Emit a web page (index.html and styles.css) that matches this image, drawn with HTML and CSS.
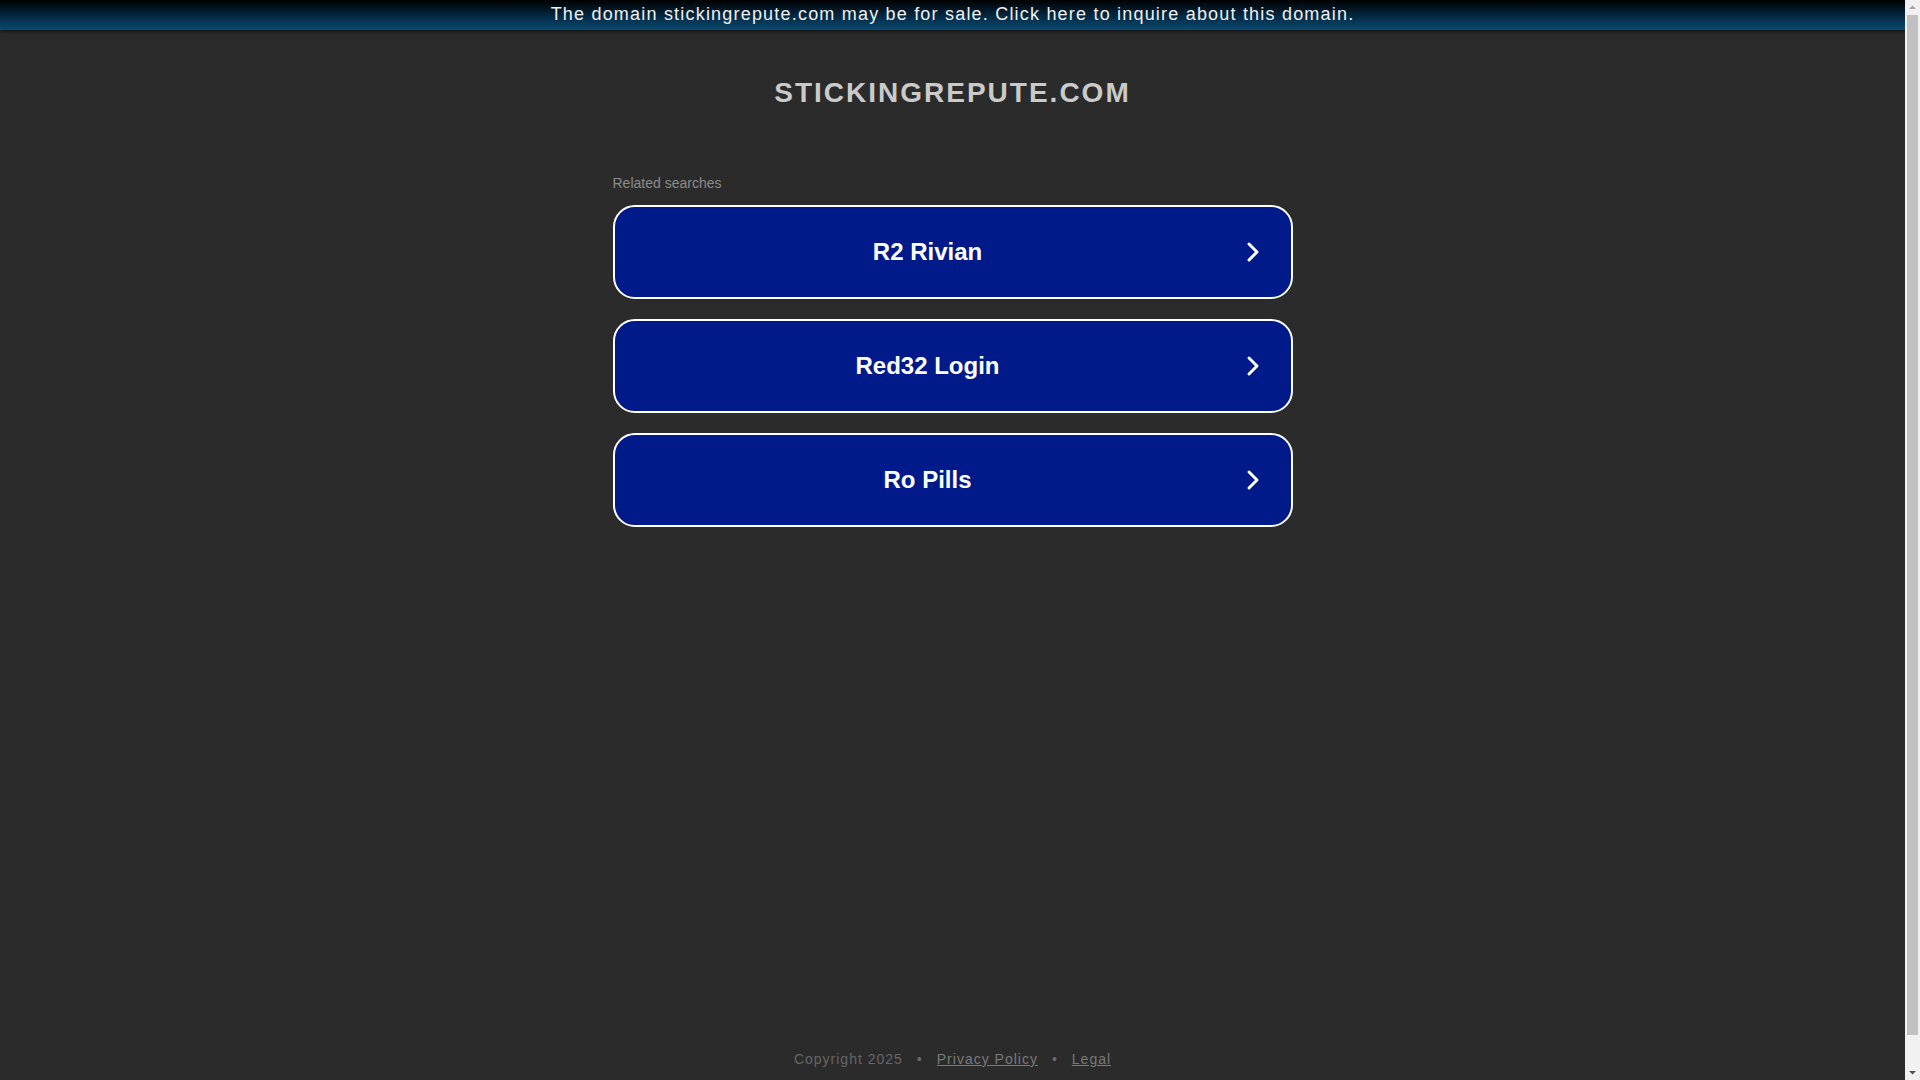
FILE: index.html
```html
<!DOCTYPE html>
<html lang="en">
<head>
<meta charset="utf-8">
<title>stickingrepute.com</title>
<link rel="stylesheet" href="styles.css">
</head>
<body>
<div class="page">
  <a class="banner" href="#">The domain stickingrepute.com may be for sale. Click here to inquire about this domain.</a>
  <h1 class="title">STICKINGREPUTE.COM</h1>
  <main class="content">
    <div class="label">Related searches</div>
    <div class="list">
      <a class="item" href="#"><span class="item-text">R2 Rivian</span><svg class="chev" width="14" height="22" viewBox="0 0 14 22"><path d="M3 3 L11 11 L3 19" fill="none" stroke="#fff" stroke-width="3" stroke-linecap="round" stroke-linejoin="round"/></svg></a>
      <a class="item" href="#"><span class="item-text">Red32 Login</span><svg class="chev" width="14" height="22" viewBox="0 0 14 22"><path d="M3 3 L11 11 L3 19" fill="none" stroke="#fff" stroke-width="3" stroke-linecap="round" stroke-linejoin="round"/></svg></a>
      <a class="item" href="#"><span class="item-text">Ro Pills</span><svg class="chev" width="14" height="22" viewBox="0 0 14 22"><path d="M3 3 L11 11 L3 19" fill="none" stroke="#fff" stroke-width="3" stroke-linecap="round" stroke-linejoin="round"/></svg></a>
    </div>
  </main>
  <footer class="footer">
    <span class="copy">Copyright 2025</span>
    <span class="dot">•</span>
    <a class="flink" href="#">Privacy Policy</a>
    <span class="dot">•</span>
    <a class="flink" href="#">Legal</a>
  </footer>
</div>
<div class="scrollbar" aria-hidden="true">
  <svg class="sb-arrow" width="15" height="15" viewBox="0 0 15 15"><path d="M4 9 L7.5 5.5 L11 9 Z" fill="#a3a3a3"/></svg>
  <div class="sb-track"><div class="sb-thumb"></div></div>
  <svg class="sb-arrow" width="15" height="15" viewBox="0 0 15 15"><path d="M4 6 L7.5 9.5 L11 6 Z" fill="#505050"/></svg>
</div>
</body>
</html>
```
FILE: styles.css
```css
html, body {
  margin: 0;
  padding: 0;
}
body {
  background: #2b2b2b;
  font-family: "Liberation Sans", Arial, sans-serif;
  color: #ccc;
}
.page {
  display: flex;
  flex-direction: column;
  align-items: center;
  min-height: 1110px;
  margin-right: 15px;
}
.banner {
  align-self: stretch;
  display: block;
  height: 30px;
  line-height: 28px;
  text-align: center;
  font-size: 18px;
  letter-spacing: 1.2px;
  color: #f0f0f0;
  text-decoration: none;
  background: linear-gradient(to bottom, #000 0%, #032a44 55%, #0a4a70 100%);
  box-shadow: 0 2px 3px rgba(0,0,0,0.45);
}
.title {
  margin: 46px 0 0 0;
  font-size: 28px;
  line-height: 34px;
  font-weight: bold;
  letter-spacing: 2px;
  color: #cacaca;
}
.content {
  width: 680px;
  margin-top: 65px;
}
.label {
  font-size: 14px;
  line-height: 17px;
  color: #8c8c8c;
}
.list {
  display: flex;
  flex-direction: column;
  gap: 20px;
  margin-top: 13px;
}
.item {
  display: flex;
  align-items: center;
  height: 90px;
  border: 2px solid #fff;
  border-radius: 22px;
  background: #011a8a;
  color: #fff;
  text-decoration: none;
}
.item-text {
  flex: 1;
  text-align: center;
  font-size: 24px;
  font-weight: bold;
}
.chev {
  margin-left: 5px;
  margin-right: 31px;
}
.footer {
  margin-top: auto;
  padding-bottom: 42px;
  display: flex;
  gap: 12px;
  font-size: 14px;
  line-height: 17px;
  letter-spacing: 1px;
  color: #666;
}
.dot {
  margin: 0 2px;
  color: #6a6a6a;
}
.flink {
  color: #7a7a7a;
  text-decoration: underline;
}
.scrollbar {
  position: fixed;
  top: 0;
  right: 0;
  width: 15px;
  height: 100vh;
  background: #f1f1f1;
  display: flex;
  flex-direction: column;
}
.sb-arrow {
  flex: none;
  display: block;
}
.sb-track {
  flex: 1;
  padding: 0 2px;
}
.sb-thumb {
  height: 1020px;
  background: #c1c1c1;
}
```
